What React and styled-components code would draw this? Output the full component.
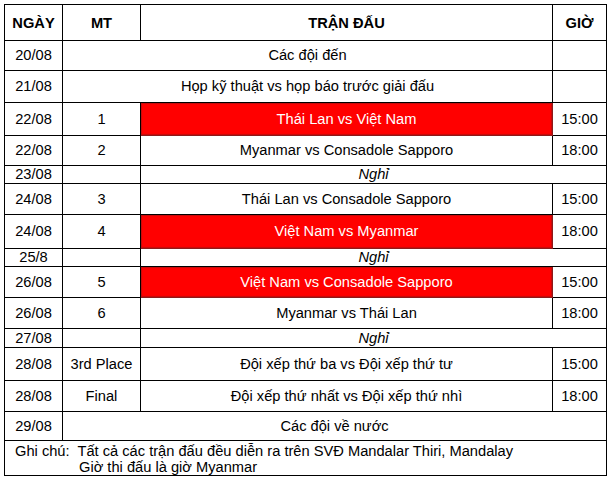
import React from 'react';
import styled, { createGlobalStyle } from 'styled-components';

const GlobalStyle = createGlobalStyle`
  html, body {
    margin: 0;
    padding: 0;
    background: #ffffff;
  }
  body {
    font-family: "Liberation Sans", Arial, sans-serif;
    color: #000000;
  }
`;

const Page = styled.div`
  padding: 4px 0 0 4px;
`;

const Table = styled.table`
  border-collapse: collapse;
  table-layout: fixed;
  width: 602px;
  font-size: 14.67px;
`;

const Row = styled.tr`
  height: ${props => props.h}px;
`;

const HeadCell = styled.th`
  border: 1px solid #000;
  font-weight: 700;
  text-align: center;
  vertical-align: middle;
  padding: 0;
`;

const Cell = styled.td`
  border: 1px solid #000;
  text-align: center;
  vertical-align: middle;
  padding: 0;
  line-height: 1;
  white-space: nowrap;
  font-style: ${props => (props.italic ? 'italic' : 'normal')};
`;

const RedCell = styled(Cell)`
  background: #ff0000;
  color: #ffffff;
  border-color: #8e1a1a;
  box-shadow: inset 0 0 1px 1px #c40c0c;
`;

const NoteCell = styled.td`
  border: 1px solid #000;
  padding: 1px 0 0 10px;
  text-align: left;
  vertical-align: middle;
  line-height: 16px;
`;

const NoteLine = styled.div`
  padding-left: ${props => props.indent || 0}px;
  white-space: pre;
`;

const schedule = [
  { date: '20/08', type: 'span2', text: 'Các đội đến', h: 30 },
  { date: '21/08', type: 'span2', text: 'Họp kỹ thuật vs họp báo trước giải đấu', h: 32 },
  { date: '22/08', mt: '1', text: 'Thái Lan vs Việt Nam', time: '15:00', red: true, h: 33 },
  { date: '22/08', mt: '2', text: 'Myanmar vs Consadole Sapporo', time: '18:00', h: 30 },
  { date: '23/08', type: 'rest', h: 18 },
  { date: '24/08', mt: '3', text: 'Thái Lan vs Consadole Sapporo', time: '15:00', h: 31 },
  { date: '24/08', mt: '4', text: 'Việt Nam vs Myanmar', time: '18:00', red: true, h: 34 },
  { date: '25/8', type: 'rest', h: 18 },
  { date: '26/08', mt: '5', text: 'Việt Nam vs Consadole Sapporo', time: '15:00', red: true, h: 31 },
  { date: '26/08', mt: '6', text: 'Myanmar vs Thái Lan', time: '18:00', h: 31 },
  { date: '27/08', type: 'rest', h: 19 },
  { date: '28/08', mt: '3rd Place', text: 'Đội xếp thứ ba vs Đội xếp thứ tư', time: '15:00', h: 33 },
  { date: '28/08', mt: 'Final', text: 'Đội xếp thứ nhất vs Đội xếp thứ nhì', time: '18:00', h: 31 },
  { date: '29/08', type: 'span3', text: 'Các đội về nước', h: 29 },
];

const ScheduleRow = ({ item }) => {
  if (item.type === 'span2') {
    return (
      <Row h={item.h}>
        <Cell>{item.date}</Cell>
        <Cell colSpan={2}>{item.text}</Cell>
        <Cell />
      </Row>
    );
  }
  if (item.type === 'span3') {
    return (
      <Row h={item.h}>
        <Cell>{item.date}</Cell>
        <Cell colSpan={3}>{item.text}</Cell>
      </Row>
    );
  }
  if (item.type === 'rest') {
    return (
      <Row h={item.h}>
        <Cell>{item.date}</Cell>
        <Cell />
        <Cell colSpan={2} italic>Nghỉ</Cell>
      </Row>
    );
  }
  const Match = item.red ? RedCell : Cell;
  return (
    <Row h={item.h}>
      <Cell>{item.date}</Cell>
      <Cell>{item.mt}</Cell>
      <Match>{item.text}</Match>
      <Cell>{item.time}</Cell>
    </Row>
  );
};

export default function App() {
  return (
    <Page>
      <GlobalStyle />
      <Table>
        <colgroup>
          <col style={{ width: 58 }} />
          <col style={{ width: 78 }} />
          <col style={{ width: 412 }} />
          <col style={{ width: 54 }} />
        </colgroup>
        <thead>
          <Row h={36}>
            <HeadCell>NGÀY</HeadCell>
            <HeadCell>MT</HeadCell>
            <HeadCell>TRẬN ĐẤU</HeadCell>
            <HeadCell>GIỜ</HeadCell>
          </Row>
        </thead>
        <tbody>
          {schedule.map((item, i) => (
            <ScheduleRow key={i} item={item} />
          ))}
          <Row h={35}>
            <NoteCell colSpan={4}>
              <NoteLine>Ghi chú:  Tất cả các trận đấu đều diễn ra trên SVĐ Mandalar Thiri, Mandalay</NoteLine>
              <NoteLine indent={64}>Giờ thi đấu là giờ Myanmar</NoteLine>
            </NoteCell>
          </Row>
        </tbody>
      </Table>
    </Page>
  );
}
